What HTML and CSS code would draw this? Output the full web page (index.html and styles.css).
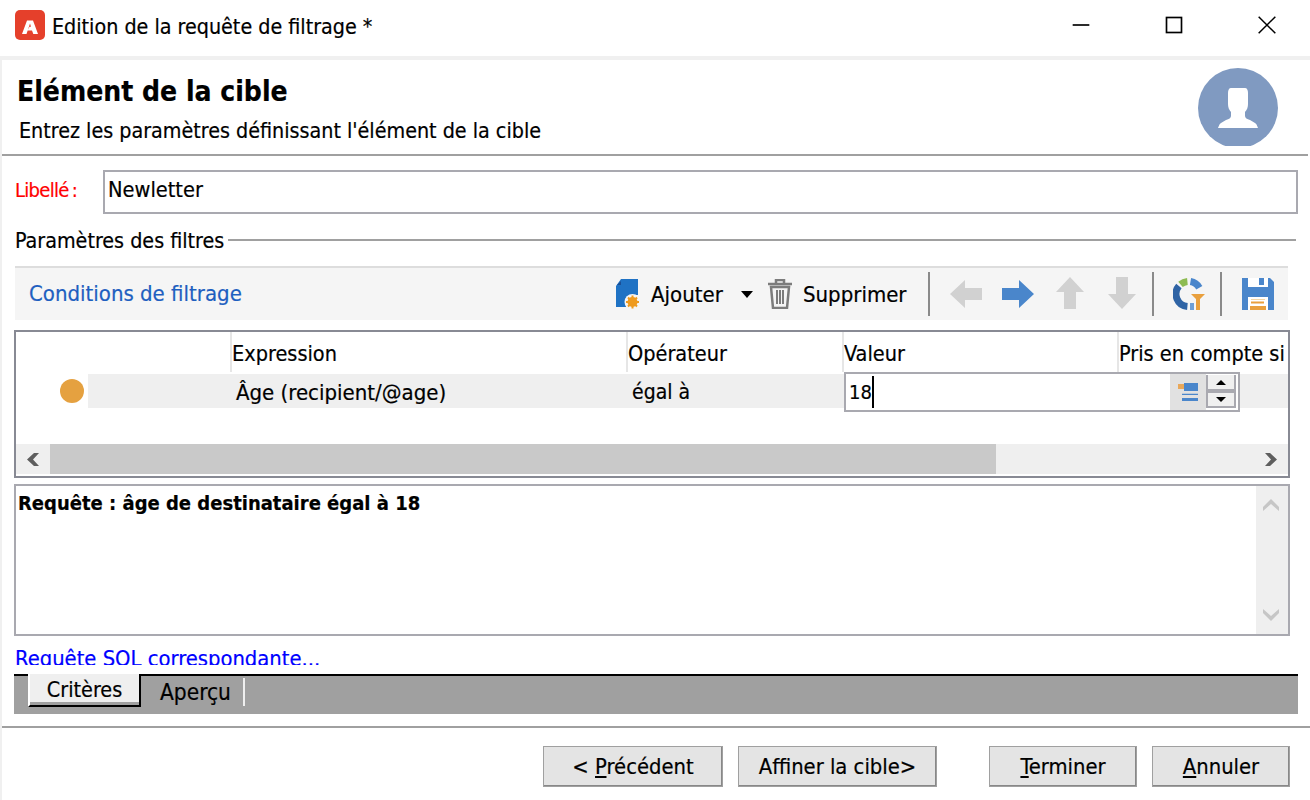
FILE: index.html
```html
<!DOCTYPE html>
<html lang="fr">
<head>
<meta charset="utf-8">
<title>Edition de la requête de filtrage</title>
<link rel="stylesheet" href="styles.css">
</head>
<body>
<div class="window">
  <header class="titlebar">
    <svg class="app-icon" viewBox="0 0 30 30"><rect width="30" height="30" rx="5" fill="#e5402b"/><path d="M12 10.500H18L23 24H18.300L17 20.500H12.500L14.500 16.700H16L15 13.500L11.500 24H7Z" fill="#fff"/></svg>
    <span class="window-title">Edition de la requête de filtrage *</span>
    <div class="window-controls">
      <svg viewBox="0 0 24 24"><path d="M2 12h20" stroke="#000" stroke-width="2"/></svg>
      <svg viewBox="0 0 24 24"><rect x="3" y="3" width="18" height="18" fill="none" stroke="#000" stroke-width="2"/></svg>
      <svg viewBox="0 0 24 24"><path d="M2 2l20 20M22 2L2 22" stroke="#000" stroke-width="1.800"/></svg>
    </div>
  </header>
  <div class="content">
    <section class="wizard-head">
      <div class="wizard-text">
        <h1>Elément de la cible</h1>
        <p>Entrez les paramètres définissant l'élément de la cible</p>
      </div>
      <svg class="avatar" viewBox="0 0 80 78"><defs><clipPath id="avclip"><rect width="80" height="78"/></clipPath></defs><g clip-path="url(#avclip)"><circle cx="40" cy="40" r="40" fill="#809ac1"/><path d="M33 20h14c2 0 3 2 3 5v11c0 3-1 6-3 8v4c0 2 2 3 5 4l5 3c2 1 2 3 3 5H20c1-2 1-4 3-5l5-3c3-1 5-2 5-4v-4c-2-2-3-5-3-8V25c0-3 1-5 3-5z" fill="#fff"/></g></svg>
    </section>
    <div class="label-row">
      <label class="req-label">Libellé :</label>
      <div class="text-field">Newletter</div>
    </div>
    <div class="group-title"><span>Paramètres des filtres</span><i></i></div>
    <div class="toolbar">
      <span class="toolbar-title">Conditions de filtrage</span>
      <div class="tools">
        <svg class="ic-add" viewBox="0 0 26 30"><path d="M7 0H24V16H17L12 21V28H2V7Z" fill="#1f72c4"/><path d="M3 6L7 2V6Z" fill="#1a4f96"/><circle cx="18.500" cy="23" r="8" fill="#f5f5f5"/><circle cx="18.500" cy="23" r="5" fill="#ee9a1e"/><path d="M18.500 16.500v13M12 23h13M14 18.500l9 9M23 18.500l-9 9" stroke="#ee9a1e" stroke-width="2"/></svg>
        <span class="tool-label t-add">Ajouter</span>
        <span class="caret"></span>
        <svg class="ic-trash" viewBox="0 0 26 30"><path d="M9 4V1h8v3M1 5h24M4 8l2 21h14l2-21z" fill="none" stroke="#7c7c7c" stroke-width="2.500"/><path d="M10 11v14M13 11v14M16 11v14" stroke="#7c7c7c" stroke-width="2"/></svg>
        <span class="tool-label t-del">Supprimer</span>
        <i class="sep s1"></i>
        <svg class="arrow a1" viewBox="0 0 32 30"><path d="M0 15L15 1v8h17v12H15v8z" fill="#d1d1d1"/></svg>
        <svg class="arrow a2" viewBox="0 0 32 30"><path d="M32 15L17 1v8H0v12h17v8z" fill="#4a86cb"/></svg>
        <svg class="arrow a3" viewBox="0 0 30 32"><path d="M15 0L29 15h-8v17H9V15H1z" fill="#d1d1d1"/></svg>
        <svg class="arrow a4" viewBox="0 0 30 32"><path d="M15 32L29 17h-8V0H9v17H1z" fill="#d1d1d1"/></svg>
        <i class="sep s2"></i>
        <svg class="ic-pie" viewBox="0 0 34 32"><path d="M7.500 6.400A12.500 12.500 0 0 1 14.400 3.500" fill="none" stroke="#8dbb51" stroke-width="7"/><path d="M17.500 3.500A12.500 12.500 0 0 1 26.300 9.750" fill="none" stroke="#4a86cb" stroke-width="7"/><path d="M14.400 28.450A12.500 12.500 0 0 1 5.900 8" fill="none" stroke="#2f64a5" stroke-width="7"/><path d="M17 25h4v7h-4z" fill="#6d9fd8"/><path d="M18 16h14l-5 5v11h-4V21z" fill="#e9a03e"/></svg>
        <i class="sep s3"></i>
        <svg class="ic-save" viewBox="0 0 32 32"><path d="M0 0h28l4 4v28H0z" fill="#4a86cb"/><path d="M6 0h20v9H6z" fill="#fff"/><path d="M17 0h5v7h-5z" fill="#4a86cb"/><path d="M6 19h20v13H6z" fill="#fff"/><path d="M9 21h14v1H9z" fill="#f3d6a8"/><path d="M9 23.500h13v2H9zM8 28h16v4H8z" fill="#e9a03e"/></svg>
      </div>
    </div>
    <div class="grid-box">
      <div class="grid-head">
        <div class="col c0"></div>
        <div class="col c1">Expression</div>
        <div class="col c2">Opérateur</div>
        <div class="col c3">Valeur</div>
        <div class="col c4">Pris en compte si</div>
      </div>
      <div class="grid-row">
        <div class="cell-dot"><span class="dot"></span></div>
        <div class="cell c-blank"></div>
        <div class="cell c-exp">Âge (recipient/@age)</div>
        <div class="cell c-op">égal à</div>
      </div>
      <div class="editor">
        <span class="editor-text">18</span>
        <div class="editor-btn">
          <svg viewBox="0 0 20 18"><path d="M6 0h14v8H6zM4 10.700h16v1.300H4zM4 15h16v3H4z" fill="#4a86cb"/><path d="M0 1h6v5H0z" fill="#e9a85a"/></svg>
        </div>
        <div class="spinner"><span class="spin-up"></span><span class="spin-down"></span></div>
      </div>
      <div class="hscroll">
        <div class="sc-btn"><svg viewBox="0 0 12 13"><path d="M7 0L0 6.500L7 13h5L6 6.500L12 0z" fill="#5e5e5e"/></svg></div>
        <div class="sc-thumb"></div>
        <div class="sc-track"></div>
        <div class="sc-btn right"><svg viewBox="0 0 12 13"><path d="M5 0l7 6.500L5 13H0l6-6.500L0 0z" fill="#5e5e5e"/></svg></div>
      </div>
    </div>
    <div class="query-box">
      <div class="query-text">Requête : âge de destinataire égal à 18</div>
      <div class="vscroll">
        <svg viewBox="0 0 16 12"><path d="M8 0l8 8v4L8 5l-8 7V8z" fill="#c6c6c6"/></svg>
        <svg viewBox="0 0 16 12"><path d="M8 12L0 4V0l8 7 8-7v4z" fill="#c6c6c6"/></svg>
      </div>
    </div>
    <a class="sql-link">Requête SQL correspondante...</a>
    <div class="tabs">
      <div class="tab active">Critères</div>
      <div class="tab">Aperçu</div>
    </div>
    <footer class="footer">
      <button class="btn b-prev">&lt; <u>P</u>récédent</button>
      <button class="btn b-next">Affiner la cible&gt;</button>
      <button class="btn b-end"><u>T</u>erminer</button>
      <button class="btn b-cancel"><u>A</u>nnuler</button>
    </footer>
  </div>
</div>
</body>
</html>
```

FILE: styles.css
```css
* { box-sizing: border-box; }
html, body { margin: 0; padding: 0; background: #fff; }
body { font-family: "DejaVu Sans", sans-serif; font-stretch: condensed; font-size: 21px; color: #000; width: 1310px; height: 800px; overflow: hidden; -webkit-text-stroke: 0.2px currentColor; }
.window { width: 1310px; height: 800px; display: flex; flex-direction: column; }

.titlebar { height: 60px; border-bottom: 4px solid #f0f0f0; display: flex; align-items: center; padding-left: 15px; flex: none; }
.app-icon { width: 30px; height: 30px; margin-right: 7px; margin-top: -7px; }
.window-title { font-size: 21.300px; margin-top: -4px; }
.window-controls { margin-left: auto; display: flex; gap: 73px; padding-right: 33px; margin-top: -6px; }
.window-controls svg { width: 20px; height: 20px; }

.content { flex: 1; border-left: 2px solid #f0f0f0; display: flex; flex-direction: column; min-height: 0; }
.wizard-head { height: 96px; border-bottom: 2px solid #a0a0a0; margin-right: 2px; display: flex; justify-content: space-between; padding: 8px 30px 0 15px; flex: none; }
.wizard-text h1 { margin: 7px 0 0; font-size: 28px; font-weight: 700; line-height: 34px; font-stretch: condensed; }
.wizard-text p { margin: 8px 0 0 2px; font-size: 21.300px; line-height: 28px; }
.avatar { width: 80px; height: 78px; }

.label-row { display: flex; align-items: center; margin-top: 14px; padding-left: 13px; flex: none; }
.req-label { color: #ff0000; width: 88px; font-size: 20px; word-spacing: -2px; margin-top: -4px; letter-spacing: -0.700px; }
.text-field { width: 1195px; height: 44px; border: 2px solid #a9a9b0; padding-left: 3px; line-height: 36px; font-size: 21.600px; }

.group-title { display: flex; align-items: center; margin: 16px 14px 0 13px; height: 20px; font-size: 21.300px; flex: none; }
.group-title i { flex: 1; height: 2px; background: #a0a0a0; margin-left: 4px; }

.toolbar { position: relative; height: 54px; width: 1273px; margin: 16px 0 0 13px; background: #f5f5f5; border-top: 2px solid #ddd; display: flex; align-items: center; padding-left: 14px; flex: none; }
.toolbar-title { color: #1e5fc0; font-size: 22px; margin-top: -2px; }
.tools { margin-left: auto; height: 100%; position: relative; width: 675px; flex: none; }
.tools > * { position: absolute; }
.ic-add { left: 1px; top: 11px; width: 26px; height: 30px; }
.tool-label { top: 13px; font-size: 22px; line-height: 28px; }
.t-add { left: 38px; }
.caret { left: 128px; top: 23px; border: 6px solid transparent; border-top: 7px solid #000; border-bottom: 0; width: 0; height: 0; }
.ic-trash { left: 154px; top: 11px; width: 26px; height: 30px; }
.t-del { left: 190px; }
.sep { width: 2px; height: 44px; top: 4px; background: #8a8a8a; }
.s1 { left: 315px; }
.s2 { left: 539px; }
.s3 { left: 607px; }
.arrow { width: 32px; height: 30px; top: 11px; }
.a1 { left: 337px; }
.a2 { left: 389px; }
.a3 { left: 442px; width: 30px; height: 32px; top: 9px; }
.a4 { left: 494px; width: 30px; height: 32px; top: 9px; }
.ic-pie { left: 560px; top: 10px; width: 34px; height: 32px; }
.ic-save { left: 629px; top: 10px; width: 32px; height: 32px; }

.grid-box { position: relative; width: 1276px; height: 148px; margin: 10px 0 0 12px; border: 2px solid #888a94; flex: none; }
.grid-head { display: flex; height: 42px; }
.col { border-right: 2px solid #e6e6e6; height: 40px; line-height: 44px; font-size: 21.500px; white-space: nowrap; overflow: hidden; flex: none; }
.c0 { width: 216px; }
.c1 { width: 396px; }
.c2 { width: 216px; }
.c3 { width: 275px; }
.c4 { flex: 1; border-right: 0; }
.grid-row { display: flex; height: 34px; background: linear-gradient(#efefef, #efefef) 72px 0 no-repeat; align-items: center; font-size: 22px; }
.cell-dot { width: 72px; display: flex; justify-content: flex-end; padding-right: 4px; }
.dot { width: 24px; height: 24px; border-radius: 50%; background: #e5a140; }
.c-blank { width: 143px; }
.c-exp { width: 396px; padding: 3px 0 0 5px; }
.c-op { padding: 2px 0 0 5px; font-size: 21px; }
.editor { position: absolute; left: 828px; top: 40px; width: 396px; height: 40px; border: 2px solid #a9a9b0; background: #fff; display: flex; align-items: stretch; }
.editor-text { flex: 1; font-size: 20px; line-height: 36px; padding-left: 3px; }
.editor-text::after { content: ""; display: inline-block; width: 2px; height: 32px; background: #000; vertical-align: -9px; }
.editor-btn { width: 36px; background: #e1e1e1; display: flex; align-items: center; justify-content: center; }
.editor-btn svg { width: 20px; height: 18px; }
.spinner { width: 30px; display: flex; flex-direction: column; border: 2px solid #a9a9b0; border-top: 0; background: #a9a9b0; gap: 4px; margin: 1px 2px 2px 0; }
.spin-up, .spin-down { flex: 1; background: #f0f0f0; position: relative; }
.spin-up::after { content: ""; position: absolute; left: 8px; top: 5px; border: 5px solid transparent; border-bottom: 5px solid #000; border-top: 0; }
.spin-down::after { content: ""; position: absolute; left: 8px; top: 4px; border: 5px solid transparent; border-top: 5px solid #000; border-bottom: 0; }
.hscroll { position: absolute; left: 0; right: 0; bottom: 2px; height: 30px; display: flex; background: #efefef; }
.sc-btn { width: 34px; display: flex; align-items: center; justify-content: center; }
.sc-btn svg { width: 12px; height: 13px; }
.sc-thumb { width: 946px; background: #c9c9c9; }
.sc-track { flex: 1; }

.query-box { width: 1276px; height: 152px; margin: 6px 0 0 12px; border: 2px solid #a9a9b0; display: flex; flex: none; }
.query-text { flex: 1; font-weight: 700; font-size: 20px; padding: 2px 0 0 2px; line-height: 30px; }
.vscroll { width: 32px; background: #efefef; display: flex; flex-direction: column; justify-content: space-between; align-items: center; padding: 13px 3px 13px 0; }
.vscroll svg { width: 16px; height: 12px; }

.sql-link { display: block; height: 29px; padding-top: 9px; margin-left: 13px; color: #0000ff; font-size: 21.800px; line-height: 28px; overflow: hidden; flex: none; }

.tabs { width: 1284px; height: 40px; margin: 9px 0 0 12px; background: #a0a0a0; border-top: 2px solid #000; display: flex; padding-left: 14px; flex: none; }
.tab { font-size: 21.400px; line-height: 30px; flex: none; }
.tab.active { width: 113px; height: 33px; margin-top: -2px; background: #efefef; border-left: 2px solid #fff; border-right: 2px solid #000; border-bottom: 2px solid #000; box-shadow: inset 0 -3px 0 #a0a0a0; text-align: center; line-height: 32px; }
.tab:not(.active) { padding: 0 12px 0 19px; margin-top: 2px; height: 28px; border-right: 2px solid #efefef; line-height: 28px; font-size: 22.500px; }

.footer { margin-top: 12px; border-top: 2px solid #a0a0a0; display: flex; flex: none; padding: 18px 0 0 541px; }
.btn { font: inherit; font-stretch: condensed; font-size: 21.800px; height: 41px; background: #e4e4e4; border: 1px solid #a0a0a0; box-shadow: inset -1px -1px 0 #888; padding: 0 0 1px; color: #000; }
.b-prev { width: 180px; }
.b-next { width: 199px; margin-left: 15px; }
.b-end { width: 148px; margin-left: 52px; }
.b-cancel { width: 138px; margin-left: 15px; }
```
